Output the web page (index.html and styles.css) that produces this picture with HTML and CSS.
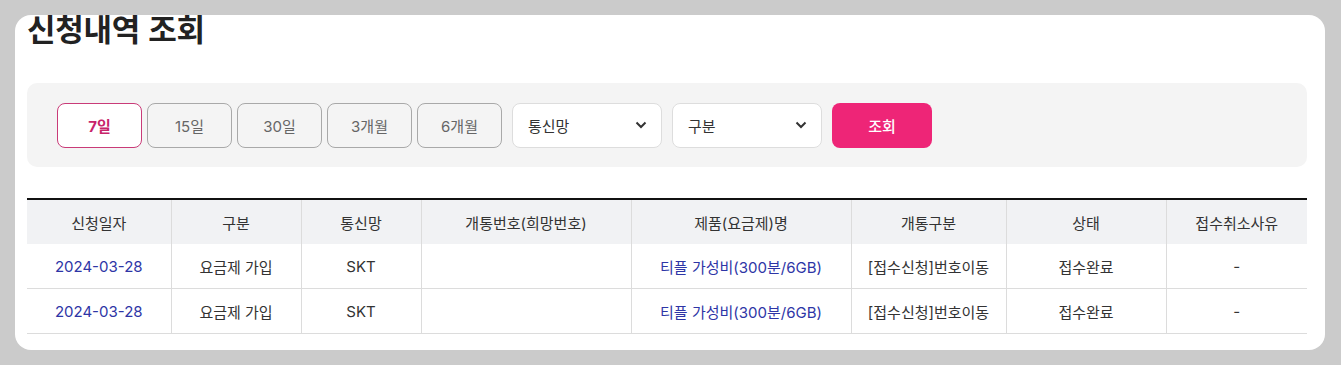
FILE: index.html
```html
<!doctype html>
<html lang="ko">
<head>
    <meta charset="UTF-8">
    <title>신청내역 조회</title>
    <link rel="stylesheet" href="styles.css">
</head>
<body>
<div class="page-box">
    <h2 class="page-title">신청내역 조회</h2>
    <!-- 검색 조건 -->
    <div class="search-box">
        <button type="button" class="period-btn on">7일</button>
        <button type="button" class="period-btn">15일</button>
        <button type="button" class="period-btn">30일</button>
        <button type="button" class="period-btn">3개월</button>
        <button type="button" class="period-btn">6개월</button>
        <div class="select-box">
            <span>통신망</span>
            <svg class="arrow" width="12" height="8" viewBox="0 0 12 8"><path d="M1.5 1.5L6 6l4.5-4.5" fill="none" stroke="#333" stroke-width="2"/></svg>
        </div>
        <div class="select-box">
            <span>구분</span>
            <svg class="arrow" width="12" height="8" viewBox="0 0 12 8"><path d="M1.5 1.5L6 6l4.5-4.5" fill="none" stroke="#333" stroke-width="2"/></svg>
        </div>
        <button type="button" class="search-btn">조회</button>
    </div>
    <!-- 신청내역 목록 -->
    <table class="list-table">
        <colgroup>
            <col style="width:144px">
            <col style="width:130px">
            <col style="width:120px">
            <col style="width:210px">
            <col style="width:220px">
            <col style="width:155px">
            <col style="width:160px">
            <col>
        </colgroup>
        <thead>
        <tr>
            <th>신청일자</th>
            <th>구분</th>
            <th>통신망</th>
            <th>개통번호(희망번호)</th>
            <th>제품(요금제)명</th>
            <th>개통구분</th>
            <th>상태</th>
            <th>접수취소사유</th>
        </tr>
        </thead>
        <tbody>
        <tr>
            <td class="link">2024-03-28</td>
            <td>요금제 가입</td>
            <td>SKT</td>
            <td></td>
            <td class="link">티플 가성비(300분/6GB)</td>
            <td>[접수신청]번호이동</td>
            <td>접수완료</td>
            <td>-</td>
        </tr>
        <tr>
            <td class="link">2024-03-28</td>
            <td>요금제 가입</td>
            <td>SKT</td>
            <td></td>
            <td class="link">티플 가성비(300분/6GB)</td>
            <td>[접수신청]번호이동</td>
            <td>접수완료</td>
            <td>-</td>
        </tr>
        </tbody>
    </table>
</div>
</body>
</html>
```

FILE: styles.css
```css
/*reset*/
body, h1, h2, h3, p, ul, li, button, th, td {
    margin: 0;
    padding: 0;
}
body, button, table {
    font-family: Inter, "Noto Sans CJK KR", "Noto Sans", sans-serif;
}
body {
    background-color: #cbcbcb;
    padding: 15px 16px 15px 15px;
}
table {
    border-collapse: collapse;
    border-spacing: 0;
}
/*/reset*/
.page-box {
    height: 335px;
    background-color: #fff;
    border-radius: 16px;
    padding: 0 18px 0 12px;
    overflow: hidden;
    box-sizing: border-box;
}
.page-title {
    font-family: "Noto Sans CJK KR", sans-serif;
    font-size: 31px;
    font-weight: 700;
    line-height: 40px;
    margin-top: -7px;
    color: #222;
    letter-spacing: -0.3px;
}
.search-box {
    display: flex;
    align-items: center;
    margin-top: 35px;
    height: 84px;
    padding: 0 30px;
    background-color: #f4f4f4;
    border-radius: 10px;
}
.period-btn {
    width: 85px;
    height: 45px;
    margin-right: 5px;
    border: 1px solid #a9a9a9;
    border-radius: 8px;
    background-color: transparent;
    font-size: 15px;
    color: #666;
}
.period-btn.on {
    border-color: #c93b78;
    background-color: #fff;
    color: #c8246a;
    font-weight: 700;
}
.select-box {
    display: flex;
    align-items: center;
    justify-content: space-between;
    width: 150px;
    height: 45px;
    margin: 0 5px;
    padding: 0 14px 0 15px;
    box-sizing: border-box;
    background-color: #fff;
    border: 1px solid #ddd;
    border-radius: 8px;
    font-size: 15px;
    color: #333;
}
.search-btn {
    width: 100px;
    height: 45px;
    margin-left: 5px;
    border: none;
    border-radius: 8px;
    background-color: #ee2577;
    color: #fff;
    font-size: 15px;
    font-weight: 500;
}
.list-table {
    width: 100%;
    margin-top: 31px;
    table-layout: fixed;
    border-top: 2px solid #111;
    font-size: 15px;
    color: #333;
    text-align: center;
}
.list-table th {
    height: 44px;
    background-color: #f1f2f4;
    font-weight: 400;
    border-left: 1px solid #dcdcdc;
}
.list-table td {
    height: 44px;
    border-left: 1px solid #dcdcdc;
    border-bottom: 1px solid #dcdcdc;
}
.list-table th:first-child,
.list-table td:first-child {
    border-left: none;
}
.list-table .link {
    color: #2e35a6;
}
```
